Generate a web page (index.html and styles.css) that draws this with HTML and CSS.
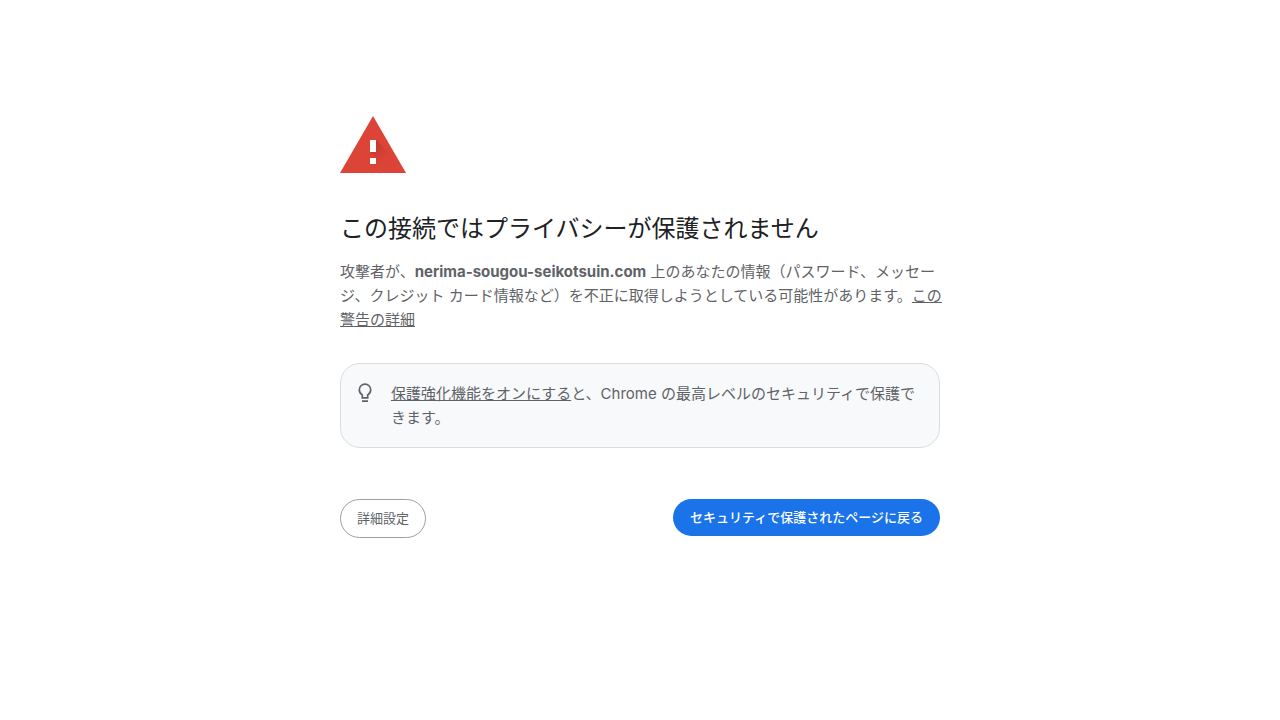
FILE: index.html
```html
<!DOCTYPE html>
<html lang="ja">
<head>
    <meta charset="utf-8">
    <meta name="viewport" content="width=device-width, initial-scale=1">
    <title>プライバシー エラー</title>
    <link rel="stylesheet" href="styles.css">
</head>
<body>
    <main class="interstitial">
        <svg class="warning-icon" viewBox="0 0 66 57" aria-hidden="true">
            <defs>
                <linearGradient id="shade" gradientUnits="userSpaceOnUse" x1="33" y1="30" x2="50" y2="47">
                    <stop offset="0" stop-color="#a93226" stop-opacity=".6"/>
                    <stop offset="1" stop-color="#db4437" stop-opacity="0"/>
                </linearGradient>
            </defs>
            <path fill="#db4437" d="M33 0 66 57H0z"/>
            <path fill="url(#shade)" d="M36 24 50 38 61 57H39L30 48H36V42L30 36H36z"/>
            <path fill="#fff" d="M30 24h6v12h-6zM30 42h6v6h-6z"/>
        </svg>

        <h1>この接続ではプライバシーが保護されません</h1>
        <p class="message">攻撃者が、<strong>nerima-sougou-seikotsuin.com</strong> 上のあなたの情報（パスワード、メッセージ、クレジット カード情報など）を不正に取得しようとしている可能性があります。<a href="#">この警告の詳細</a></p>

        <div class="tip">
            <svg class="bulb-icon" viewBox="0 0 24 24" aria-hidden="true">
                <path d="M9.300 15.800V12.900C7.400 11.800 6.300 10 6.300 7.800a5.700 5.700 0 0 1 11.400 0c0 2.200-1.100 4-3 5.100v2.900zM9 19.200h6"/>
            </svg>
            <p><a href="#">保護強化機能をオンにする</a>と、Chrome の最高レベルのセキュリティで保護できます。</p>
        </div>

        <div class="buttons">
            <button type="button" class="secondary">詳細設定</button>
            <button type="button" class="primary">セキュリティで保護されたページに戻る</button>
        </div>
    </main>
</body>
</html>
```
FILE: styles.css
```css
body {
    margin: 0;
    background: #fff;
    color: #5f6368;
    font-family: Inter, "Noto Sans CJK JP", sans-serif;
    font-size: 15px;
    line-height: 24px;
}

.interstitial {
    box-sizing: border-box;
    max-width: 648px;
    margin: 0 auto;
    padding: 116px 24px 48px;
}

.warning-icon {
    display: block;
    width: 66px;
    height: 57px;
}

h1 {
    margin: 40px 0 15px;
    color: #202124;
    font-size: 24px;
    font-weight: 400;
    line-height: 32px;
}

p {
    margin: 0;
}

.message {
    margin-right: -4px;
}

a {
    color: inherit;
    text-decoration: underline;
}

.tip {
    display: flex;
    gap: 14px;
    margin-top: 31px;
    padding: 18px 16px 17px;
    border: 1px solid #dadce0;
    border-radius: 20px;
    background: #f8f9fa;
}

.bulb-icon {
    flex: none;
    width: 24px;
    height: 24px;
    margin-left: -4px;
    fill: none;
    stroke: #5f6368;
    stroke-width: 1.7;
}

.buttons {
    display: flex;
    flex-wrap: wrap;
    align-items: flex-start;
    justify-content: space-between;
    gap: 12px;
    margin-top: 51px;
}

button {
    border: 0;
    border-radius: 20px;
    padding: 8px 16px;
    font-family: inherit;
    font-size: 13px;
    line-height: 21px;
    cursor: pointer;
}

.primary {
    padding: 8px 17px;
    background: #1a73e8;
    color: #fff;
    font-weight: 500;
}

.secondary {
    border: 1px solid #9aa0a6;
    background: #fff;
    color: #5f6368;
}
```
